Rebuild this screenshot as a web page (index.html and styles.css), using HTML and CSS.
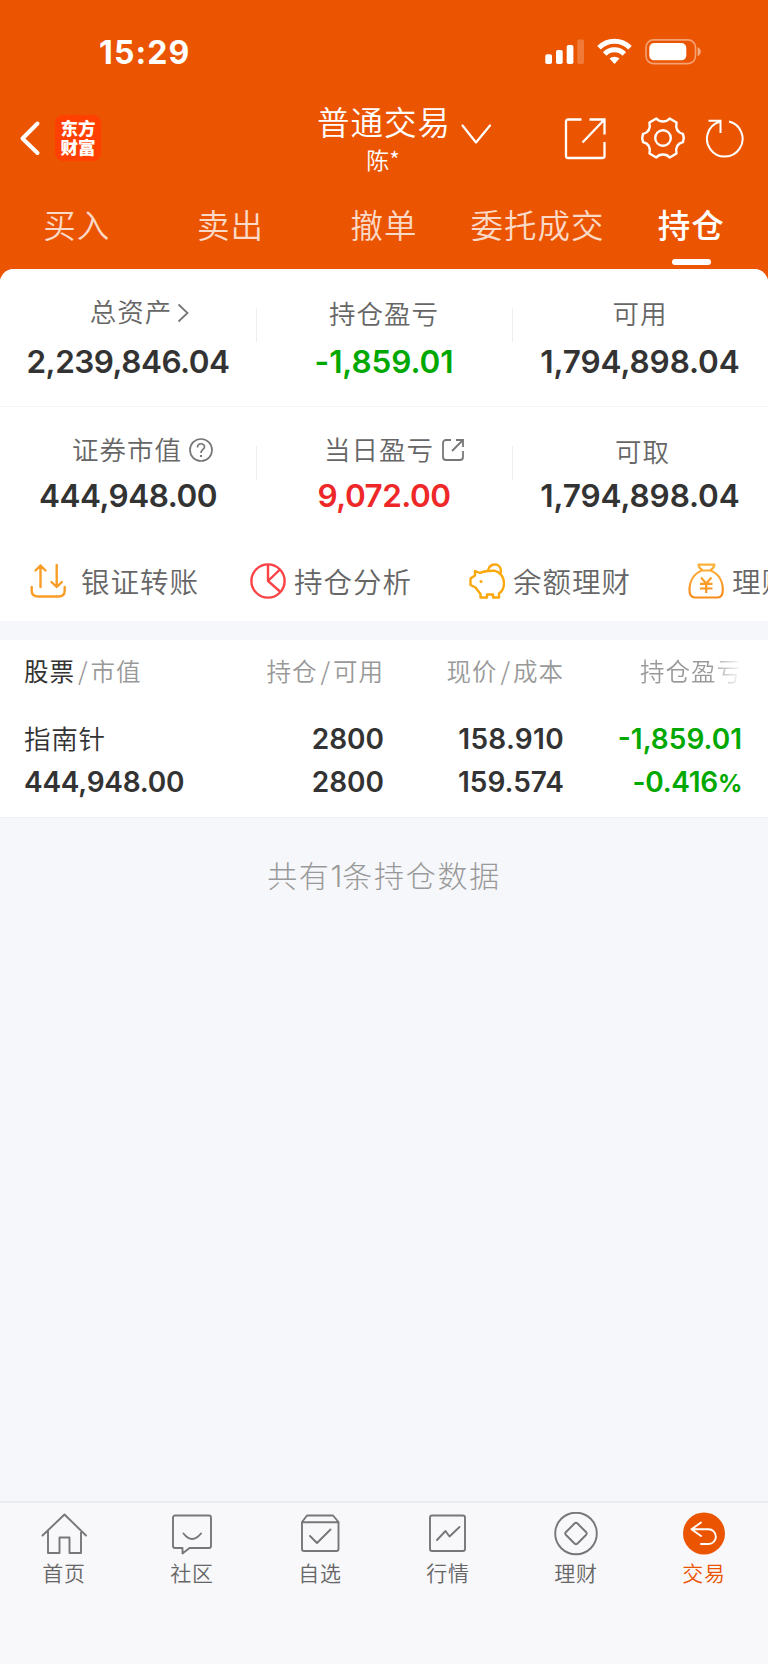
FILE: index.html
```html
<!DOCTYPE html>
<html lang="zh-CN">
<head>
<meta charset="utf-8">
<title>持仓</title>
<link rel="stylesheet" href="styles.css">
</head>
<body>
<div class="app">
  <header class="top">
    <div class="status">
      <span class="clock">15:29</span>
      <svg class="status-icons" width="158" height="28" viewBox="0 0 158 28" fill="#fff">
        <rect x="0.3" y="16.3" width="6.7" height="9.7" rx="1.8"/>
        <rect x="11" y="12" width="6.7" height="14" rx="1.8"/>
        <rect x="21.7" y="7" width="6.7" height="19" rx="1.8"/>
        <rect x="32.3" y="1.5" width="6.7" height="24.5" rx="1.8" opacity=".22"/>
        <g fill="none" stroke="#fff" stroke-width="5">
          <path d="M54 9.7a21.6 21.6 0 0 1 31 0"/>
          <path d="M59.700 16a13.500 13.500 0 0 1 19.600 0"/>
        </g>
        <path d="M64.500 20.600a7.400 7.400 0 0 1 10 0L69.500 26z"/>
        <rect x="101" y="1.900" width="49.500" height="23.700" rx="7.500" fill="none" stroke="#fff" stroke-width="1.600" opacity=".45"/>
        <rect x="104.300" y="5" width="37" height="17.300" rx="4.800"/>
        <path d="M152.600 9.300c4.200 1.200 4.200 7.600 0 8.800z" opacity=".5"/>
      </svg>
    </div>
    <div class="nav">
      <svg class="back" width="24" height="38" viewBox="0 0 24 38" fill="none" stroke="#fff" stroke-width="4" stroke-linecap="round" stroke-linejoin="round"><path d="M19.500 4.500L4.500 19.500L19.500 34"/></svg>
      <div class="logo">东方<br>财富</div>
      <div class="account">
        <div class="account-name">普通交易</div>
        <div class="account-user">陈*</div>
      </div>
      <svg class="caret" width="32" height="22" viewBox="0 0 32 22" fill="none" stroke="#fff" stroke-width="2.200" stroke-linecap="round" stroke-linejoin="round"><path d="M2.500 2.500L16 19.500L30 2.500"/></svg>
      <svg class="share" width="44" height="44" viewBox="0 0 44 44" fill="none" stroke="#fff" stroke-width="2.300"><path d="M17.500 2.500H4a2 2 0 0 0-2 2V39a2 2 0 0 0 2 2H38.500a2 2 0 0 0 2-2V25M25.500 2.500H40.500V17.500M40 3L18.500 25.500"/></svg>
      <svg class="gear" width="46" height="46" viewBox="0 0 46 46" fill="none" stroke="#fff" stroke-width="2.400" stroke-linejoin="round"><circle cx="23" cy="23" r="7.800"/><path d="M16.300 3.500C19.500 7.500 26.500 7.500 29.700 3.500L36.500 7.500C35.500 13 37 17.500 43 19Q44.500 23 43 27C37 28.500 35.500 33 36.500 38.500L29.700 42.500C26.500 38.500 19.500 38.500 16.300 42.500L9.500 38.500C10.500 33 9 28.500 3 27Q1.500 23 3 19C9 17.500 10.500 13 9.500 7.500Z"/></svg>
      <svg class="refresh" width="42" height="42" viewBox="0 0 42 42" fill="none" stroke="#fff" stroke-width="2"><path d="M25 4.500A17.800 17.800 0 1 1 15.800 4.700M4.500 3.700H16.500V16"/></svg>
    </div>
    <nav class="tabs">
      <a>买入</a><a>卖出</a><a>撤单</a><a>委托成交</a><a class="active">持仓</a>
    </nav>
  </header>

  <section class="panel">
    <div class="stats stats-a">
      <div class="cell">
        <div class="label raised total">总资产<svg class="go" width="12" height="20" viewBox="0 0 12 20" fill="none" stroke="#777" stroke-width="1.800"><path d="M1.500 1.500L10.500 10L1.500 18.500"/></svg></div>
        <div class="value">2,239,846.04</div>
      </div>
      <div class="cell">
        <div class="label">持仓盈亏</div>
        <div class="value loose down">-1,859.01</div>
      </div>
      <div class="cell">
        <div class="label">可用</div>
        <div class="value loose">1,794,898.04</div>
      </div>
    </div>
    <div class="stats stats-b">
      <div class="cell">
        <div class="label raised market">证券市值<svg class="help" width="24" height="24" viewBox="0 0 24 24" fill="none" stroke="#777" stroke-width="1.700"><circle cx="12" cy="12" r="11"/><path d="M8.500 9.500C8.500 4.500 15.600 4.700 15.500 9C15.400 11.500 12 11.500 12 15"/><path d="M12 17v2" stroke-width="2"/></svg></div>
        <div class="value">444,948.00</div>
      </div>
      <div class="cell">
        <div class="label raised today">当日盈亏<svg class="open" width="24" height="24" viewBox="0 0 24 24" fill="none" stroke="#777" stroke-width="1.800"><path d="M10 2H5a3 3 0 0 0-3 3V19a3 3 0 0 0 3 3H19a3 3 0 0 0 3-3V13M15 2H22V9M22 2L11 13"/></svg></div>
        <div class="value up">9,072.00</div>
      </div>
      <div class="cell">
        <div class="label cash">可取</div>
        <div class="value loose">1,794,898.04</div>
      </div>
    </div>
    <div class="quick">
      <a class="wide"><svg width="36" height="36" viewBox="0 0 36 36" fill="none" stroke="#f99d27" stroke-width="2.400" stroke-linecap="round" stroke-linejoin="round"><path d="M10.500 24V2.500M5.500 7.500L10.500 2.500L15.500 7.500M26.700 2V23.500M21.500 19L26.700 24L31.900 19M1.700 24V27.500Q1.700 33.500 8 33.500H28.500Q34.700 33.500 34.700 27.500V24"/></svg>银证转账</a>
      <a><svg width="36" height="36" viewBox="0 0 36 36" fill="none" stroke="#fb4246" stroke-width="2.400"><circle cx="18" cy="18" r="16.600"/><path d="M18 1.500V18L30 28.500M18 18L30 6.500"/></svg>持仓分析</a>
      <a><svg width="36" height="36" viewBox="0 0 36 36" fill="none" stroke="#fba80d" stroke-width="2.400" stroke-linejoin="round"><path d="M6 8L11 10C16 7.500 21 7.700 25.500 7.700C31 9 35 14 35 20C35 25 33 28.500 30 30.500V34.500H24V31.500H18V34.500H11.500V31L6.500 24.500L1.500 22V15.500L6 12.500Z"/><path d="M19 7.700C20.500-.3 30.500-.5 31.800 6.500Q32.200 9 31 12"/><circle cx="12" cy="18.500" r="1.500" fill="#fba80d" stroke="none"/></svg>余额理财</a>
      <a><svg width="36" height="36" viewBox="0 0 36 36" fill="none" stroke="url(#bag)" stroke-width="2.200" stroke-linejoin="round"><defs><linearGradient id="bag" x1="0" y1="0" x2="0" y2="36" gradientUnits="userSpaceOnUse"><stop stop-color="#fdb43c"/><stop offset="1" stop-color="#f98a18"/></linearGradient></defs><path d="M10.500 1.700H26.500Q25.700 5.500 22 7.500H14.500Q11 5.500 10.500 1.700ZM14 7.500C6 10.500 1.500 18 1.500 27C1.500 32 3.500 34.500 7 34.500H29.500C33 34.500 34.800 32 34.800 27C34.800 18 30.500 10.500 22.500 7.500M13 14.500L18.200 20.500L23.500 14.500M18.200 20.500V30M12 20.800H24.500M12 25.500H24.500"/></svg>理财</a>
    </div>
  </section>

  <section class="holdings">
    <div class="row head">
      <div><b>股票</b><i>/</i>市值</div>
      <div>持仓<i>/</i>可用</div>
      <div>现价<i>/</i>成本</div>
      <div class="fade">持仓盈亏</div>
    </div>
    <div class="row line1">
      <div class="stock">指南针</div><div>2800</div><div class="price">158.910</div><div class="down">-1,859.01</div>
    </div>
    <div class="row line2">
      <div class="worth">444,948.00</div><div>2800</div><div>159.574</div><div class="down">-0.416<span class="percent">%</span></div>
    </div>
  </section>
  <p class="summary">共有<span>1</span>条持仓数据</p>

  <footer class="bar">
    <a><svg width="46" height="46" viewBox="0 0 46 46"><path d="M1.500 23.500L23.500 2.500L45 23.500M7 18.500V41H18.500V25.500H28.500V41H40V18.500"/></svg>首页</a>
    <a><svg width="46" height="46" viewBox="0 0 46 46"><path d="M6 3.500H40a2 2 0 0 1 2 2V34a2 2 0 0 1-2 2H20.500L13.500 41.500V36H6a2 2 0 0 1-2-2V5.500a2 2 0 0 1 2-2ZM14.500 21.500Q23 32.500 32 21.500"/></svg>社区</a>
    <a><svg width="46" height="46" viewBox="0 0 46 46"><path d="M10 3.500H36L41.500 10V37a2 2 0 0 1-2 2H7a2 2 0 0 1-2-2V10ZM5 10.200H41.500M13 24L20 31L33.500 17.500"/></svg>自选</a>
    <a><svg width="46" height="46" viewBox="0 0 46 46"><rect x="5" y="3.500" width="35" height="35.500" rx="2"/><path d="M12 28L20.500 19L24.500 24.500L34.500 15"/></svg>行情</a>
    <a><svg width="46" height="46" viewBox="0 0 46 46"><circle cx="23" cy="21.500" r="20.800"/><path d="M21.500 11.500Q23 10 24.500 11.500L33 20Q34.500 21.500 33 23L24.500 31.500Q23 33 21.500 31.500L13 23Q11.500 21.500 13 20Z"/></svg>理财</a>
    <a class="active"><svg width="46" height="46" viewBox="0 0 46 46"><circle class="disc" cx="23" cy="21.500" r="21"/><path class="arrow" d="M20 10.500L10.500 17.300L20 24M11 17.300H27.500A7.300 7.300 0 0 1 27.500 32H20"/></svg>交易</a>
  </footer>
</div>
</body>
</html>
```

FILE: styles.css
```css
* { box-sizing: border-box; }
body { margin: 0; }
svg { flex: none; display: block; }

.app {
  width: 768px;
  height: 1665px;
  display: flex;
  flex-direction: column;
  background: #f6f7fa;
  border-bottom: 1px solid #fff;
  overflow: hidden;
  font-family: "Noto Sans CJK SC", sans-serif;
  font-weight: 350;
  color: #666;
}

/* header */
.top { height: 281px; flex: none; background: #eb5502; color: #fff; }
.status { height: 104px; padding: 34px 65px 0 99px; display: flex; justify-content: space-between; }
.clock { font: 700 32px/38px Inter, sans-serif; letter-spacing: 1.1px; }
.status-icons { margin-top: 4px; }
.nav { height: 82px; display: flex; align-items: flex-start; }
.back { margin: 15px 0 0 18px; }
.logo {
  width: 46px; height: 46px; margin: 11px 0 0 13px; padding-top: 3px;
  border-radius: 8px; background: #ff4000; text-align: center;
  font-size: 17.500px; line-height: 19px; font-weight: 900;
}
.account { width: 132px; margin-left: 217px; display: flex; flex-direction: column; align-items: center; }
.account-name { margin-top: -1px; font-size: 32.500px; line-height: 36px; letter-spacing: 1px; white-space: nowrap; }
.account-user { font-size: 23px; line-height: 28px; margin: 6px 2px 0 0; }
.caret { margin: 19px 0 0 10px; }
.share { margin: 13px 0 0 72px; }
.gear { margin: 11px 0 0 32px; }
.refresh { margin: 13px 0 0 18px; }
.tabs { height: 83px; display: grid; grid-template-columns: repeat(5, 1fr); }
.tabs a {
  display: flex; flex-direction: column; align-items: center; padding-top: 16px;
  font-size: 32.500px; line-height: 44px; letter-spacing: 1px; white-space: nowrap;
  color: rgba(255, 255, 255, .78);
}
.tabs .active { color: #fff; font-weight: 500; }
.tabs .active::after { content: ""; width: 39px; height: 6px; margin-top: 13px; border-radius: 3px; background: #fff; }

/* asset summary */
.panel { height: 352px; flex: none; margin-top: -12px; background: #fff; border-radius: 14px 14px 0 0; overflow: hidden; }
.stats { display: grid; grid-template-columns: repeat(3, 256px); background: #fff; }
.stats-a { height: 138px; padding-top: 26px; border-bottom: 1px solid #f3f3f3; }
.stats-b { height: 134px; padding-top: 26px; }
.cell + .cell {
  background: linear-gradient(#eee, #eee) no-repeat left 0 top 13px / 1px 34px;
}
.label { height: 36px; display: flex; align-items: center; justify-content: center; font-size: 26.500px; line-height: 32px; letter-spacing: 1px; white-space: nowrap; }
.raised { padding-bottom: 4px; }
.total { padding-left: 23px; }
.market { padding-left: 29px; }
.today { padding-left: 21px; }
.cash { padding-left: 5px; }
.go { margin: 3px 0 0 5px; }
.help { margin: 2px 0 0 7px; }
.open { margin: 2px 0 0 7px; }
.value { margin-top: 12px; text-align: center; font: 600 31.500px/38px Inter, sans-serif; letter-spacing: -.5px; color: #333; }
.value.loose { letter-spacing: -.1px; }
.stats-b .value { margin-top: 8px; }
.value.down, .down { color: #00a800; }
.value.up { color: #ee2828; }
.quick { height: 80px; display: flex; align-items: center; padding-left: 30px; }
.quick a { width: 219px; flex: none; display: flex; align-items: center; gap: 8px; white-space: nowrap; font-size: 28.500px; line-height: 36px; letter-spacing: 1px; }
.quick .wide { width: 220px; gap: 15px; }

/* holdings */
.holdings { height: 178px; flex: none; margin-top: 19px; padding-left: 24px; background: #fff; border-bottom: 1px solid #eff1f3; }
.row { display: grid; grid-template-columns: 170px 190px 180px 178px; text-align: right; white-space: nowrap; }
.row > :first-child { text-align: left; }
.head { height: 78px; padding-top: 15px; font-size: 24.500px; line-height: 32px; letter-spacing: 1px; color: #999; }
.head b { font-weight: 400; color: #333; }
.head i { font-style: normal; padding: 0 2px 0 3px; }
.fade { background: linear-gradient(90deg, #999 82%, rgba(153, 153, 153, 0) 100%); background-clip: text; -webkit-background-clip: text; color: transparent; }
.line1, .line2 { font: 600 28px/36px Inter, sans-serif; color: #333; }
.line1 { height: 43px; padding-top: 3px; }
.line1 .stock { margin-top: -1px; font: 350 26.500px/36px "Noto Sans CJK SC", sans-serif; letter-spacing: .7px; }
.line2 { padding-top: 3px; }
.price { letter-spacing: .3px; }
.worth { letter-spacing: -.25px; }
.percent { font-size: 24px; font-weight: 700; }
.line2 .down { letter-spacing: -.3px; }
.summary { margin: 34px 0 0; text-align: center; font-size: 30px; line-height: 44px; letter-spacing: 1.700px; font-weight: 300; color: #999; }
.summary span { font-family: Inter, sans-serif; letter-spacing: 0; }

/* bottom navigation */
.bar { height: 163px; flex: none; margin-top: auto; display: grid; grid-template-columns: repeat(6, 128px); border-top: 2px solid #e8edef; background: #f8f8fb; }
.bar a { display: flex; flex-direction: column; align-items: center; padding-top: 9px; font-size: 21px; line-height: 28px; letter-spacing: .7px; }
.bar svg { fill: none; stroke: #777; stroke-width: 1.900; stroke-linejoin: round; stroke-linecap: round; }
.bar .active { color: #eb5502; }
.bar .disc { fill: #eb5502; stroke: none; }
.bar .arrow { stroke: #fff; }
```
